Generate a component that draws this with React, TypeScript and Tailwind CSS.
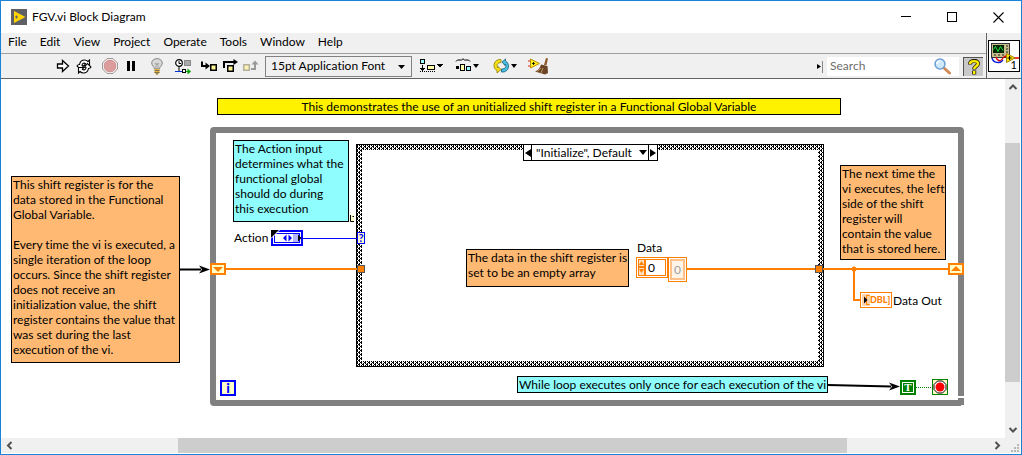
import React from 'react';
import { clsx } from 'clsx';

const menus = ['File', 'Edit', 'View', 'Project', 'Operate', 'Tools', 'Window', 'Help'];

interface ToolButtonProps {
    label: string;
    className: string;
    children: React.ReactNode;
}

const ToolButton: React.FC<ToolButtonProps> = ({ label, className, children }) => (
    <button type="button" aria-label={label} title={label} className={clsx('flex h-5 shrink-0 items-center justify-center', className)}>
        {children}
    </button>
);

interface NoteProps {
    tone: 'orange' | 'cyan' | 'yellow';
    className: string;
    children: React.ReactNode;
}

const tones = {
    orange: 'bg-[#ffb973]',
    cyan: 'bg-[#8ffdfd]',
    yellow: 'bg-[#fff200]',
};

// Free label on the diagram
const Note: React.FC<NoteProps> = ({ tone, className, children }) => (
    <p className={clsx('absolute border border-black whitespace-pre leading-[15px]', tones[tone], className)}>{children}</p>
);

const TitleBar = () => (
    <header className="flex h-8 items-center bg-white pl-2.5">
        <svg width="16" height="16" className="shrink-0">
            <rect width="16" height="16" fill="#5f6065" />
            <path d="M3 2 L14.5 8 L3 14 Z" fill="#ffd400" />
            <path d="M4 8h3M5.500 6.500v3" stroke="#5f6065" />
        </svg>
        <h1 className="ml-[5px] flex-1 text-xs">FGV.vi Block Diagram</h1>
        <button type="button" aria-label="Minimize" className="flex h-full w-[46px] items-center justify-center">
            <svg width="10" height="10" shapeRendering="crispEdges"><path d="M0 4.500h10" stroke="#000" /></svg>
        </button>
        <button type="button" aria-label="Maximize" className="flex h-full w-[46px] items-center justify-center">
            <svg width="10" height="10" shapeRendering="crispEdges"><rect x=".5" y=".5" width="9" height="9" fill="none" stroke="#000" /></svg>
        </button>
        <button type="button" aria-label="Close" className="flex h-full w-[46px] items-center justify-center">
            <svg width="11" height="11"><path d="M.5 .5l10 10M10.5 .5l-10 10" stroke="#000" strokeWidth="1.1" /></svg>
        </button>
    </header>
);

const Caret = () => <path d="M18 6h6l-3 4z" fill="#000" />;

const Toolbar = () => (
    <div className="flex h-6 items-center pl-[52px]">
        <ToolButton label="Run" className="w-5">
            <svg width="14" height="14"><path d="M1.500 5h5V1.500L12.500 7 6.500 12.500V9h-5z" fill="#fff" stroke="#000" strokeWidth="1.300" /></svg>
        </ToolButton>
        <ToolButton label="Run Continuously" className="w-[22px]">
            <svg width="16" height="15" fill="#fff" stroke="#000" strokeWidth="1.100">
                <path d="M1 7c.5-1 1.500-1.500 2.500-1.500C4 3 6 1 8.500 1c1.500 0 2.500.5 3.500 1.500L13.500 1v5.500H8L9.700 4.800C8.500 3.500 6 4 6 6.500l1.500.5L4.500 10.500z" />
                <path d="M15 8c-.5 1-1.500 1.500-2.500 1.500C12 12 10 14 7.500 14c-1.500 0-2.500-.5-3.500-1.500L2.500 14V8.500H8L6.300 10.200C7.500 11.500 10 11 10 8.500L8.500 8l3-3.500z" />
            </svg>
        </ToolButton>
        <ToolButton label="Abort Execution" className="ml-1 w-[22px]">
            <svg width="16" height="16">
                <path d="M5 .5h6L15.500 5v6L11 15.500H5L.5 11V5z" fill="#f4e4e4" stroke="#a09a9a" />
                <path d="M5.500 2.500h5l3 3v5l-3 3h-5l-3-3v-5z" fill="#dc9c9c" stroke="#c99" />
            </svg>
        </ToolButton>
        <ToolButton label="Pause" className="w-5">
            <svg width="10" height="12"><path d="M1 1h3v10H1zM6 1h3v10H6z" fill="#000" /></svg>
        </ToolButton>
        <ToolButton label="Highlight Execution" className="ml-[5px] w-[22px]">
            <svg width="12" height="17">
                <path d="M3.500 11C3.500 8.500 .7 8 .7 5 .7 2.500 3 .6 6 .6s5.300 2 5.300 4.400c0 3-2.800 3.500-2.800 6z" fill="#d8d8d8" stroke="#888" />
                <path d="M4 5l1.500 2L6 5l.5 2L8 5M5 11V7M7 11V7" fill="none" stroke="#999" strokeWidth=".8" />
                <path d="M3.500 11h5v3.500L7 16.500H5l-1.500-2z" fill="#e3b040" />
                <path d="M3.500 12.500h5M3.500 14.500h5M5 16h2" stroke="#775" />
            </svg>
        </ToolButton>
        <ToolButton label="Retain Wire Values" className="ml-1 w-[22px]">
            <svg width="16" height="15">
                <circle cx="4" cy="4" r="3.300" fill="#fff" stroke="#000" strokeWidth="1.200" />
                <path d="M4 2v2.500h2M4 7.500v5" fill="none" stroke="#000" />
                <rect x="9.500" y="1.500" width="6" height="5" fill="#aaa" stroke="#888" />
                <path d="M0 12.500h7" stroke="#0030e0" />
                <rect x="7.500" y="10.500" width="3" height="3" fill="#fff" stroke="#000" />
                <path d="M11 12.500h2" stroke="#0a0" />
                <path d="M12.500 9.500l3.500 3-3.500 3z" fill="#00a000" />
            </svg>
        </ToolButton>
        <ToolButton label="Step Into" className="ml-1 w-[22px]">
            <svg width="16" height="12">
                <path d="M1 1.500V6h5" fill="none" stroke="#000" strokeWidth="2" />
                <path d="M4.500 2.500L9 6 4.500 9.500z" fill="#000" />
                <rect x="9.750" y="4.750" width="5.500" height="5.500" fill="#fff799" stroke="#000" strokeWidth="1.500" />
            </svg>
        </ToolButton>
        <ToolButton label="Step Over" className="w-[22px]">
            <svg width="16" height="14">
                <path d="M1 9V3h11" fill="none" stroke="#000" strokeWidth="2" />
                <path d="M10.500 0l4.500 3-4.500 3z" fill="#000" />
                <rect x="4.750" y="6.750" width="5.500" height="5.500" fill="#fff799" stroke="#000" strokeWidth="1.500" />
            </svg>
        </ToolButton>
        <ToolButton label="Step Out" className="w-[18px]">
            <svg width="16" height="12">
                <rect x=".8" y="4.750" width="5.500" height="5.500" fill="#fbf3b8" stroke="#b5b09a" strokeWidth="1.500" />
                <path d="M8 9h4V4" fill="none" stroke="#999" strokeWidth="2" />
                <path d="M8.500 4.500l3.500-4 3.500 4z" fill="#999" />
            </svg>
        </ToolButton>
        <div className="relative ml-[5px]">
            <select aria-label="Text Settings" className="block h-[21px] w-[147px] appearance-none border border-[#828282] bg-[#f0f0f0] pl-[5px] text-xs">
                <option>15pt Application Font</option>
            </select>
            <svg width="7" height="4" className="pointer-events-none absolute top-[9px] right-[7px]"><path d="M0 0h7L3.500 4z" /></svg>
        </div>
        <ToolButton label="Align Objects" className="ml-1.5 w-[26px]">
            <svg width="24" height="16" shapeRendering="crispEdges">
                <rect x="1.500" y="1.500" width="4" height="4" fill="#9ff" stroke="#000" />
                <path d="M3.500 7v4" stroke="#000" />
                <path d="M1 10h5l-2.500 3z" fill="#000" />
                <path d="M1 13.500h15" stroke="#000" strokeDasharray="1 1" />
                <rect x="8.500" y="7.500" width="7" height="4" fill="#ffa" stroke="#000" />
                <Caret />
            </svg>
        </ToolButton>
        <ToolButton label="Distribute Objects" className="ml-2.5 w-[26px]">
            <svg width="24" height="16">
                <path d="M1 3.500l1.500-1.500h4L8 .8 9.500 2h4L15 3.500" fill="none" stroke="#000" />
                <rect x="1" y="8" width="3" height="3" fill="#000" />
                <rect x="5.500" y="6.500" width="4" height="6" fill="#ffa" stroke="#000" />
                <rect x="11.500" y="8.500" width="4" height="4" fill="#9ff" stroke="#000" />
                <Caret />
            </svg>
        </ToolButton>
        <ToolButton label="Reorder" className="ml-3 w-[26px]">
            <svg width="24" height="16">
                <path d="M8 1.500C4 1 1 4 1 7.500c0 2 1 4 3 5V15l4-3.500L5 8.500v1.500C3 7.500 4.500 4.500 8 4.500z" fill="#f7e017" stroke="#8a7a00" strokeWidth=".8" />
                <path d="M8.500 14c4 .5 7-2 7-6 0-2-1-4-3-5V1L9 4l3 3.500V6c2 2.500.5 5-3.500 5z" fill="#49bfe0" stroke="#135a78" strokeWidth=".8" />
                <Caret />
            </svg>
        </ToolButton>
        <ToolButton label="Clean Up Diagram" className="ml-[9px] w-6">
            <svg width="22" height="17">
                <path d="M0 3h4M0 8h4" stroke="#e02020" />
                <path d="M2.500 1l9 4.500-9 4.500z" fill="#ffee20" stroke="#c09000" />
                <path d="M4 5.500h3M5.500 4v3" stroke="#000" strokeWidth=".8" />
                <path d="M18 0l2 .5L18.500 7h-2.500z" fill="#8a5a2a" />
                <path d="M13 6.500l6.500 1.500 .5 7-3 1.500L7 13.500c3-1 5-3.500 6-7z" fill="#6b4526" />
                <path d="M9 13.500l4-3.500M13 15l2-5" stroke="#d9b070" strokeWidth=".8" />
            </svg>
        </ToolButton>
        <span className="flex-1" />
        <svg width="8" height="13" className="mr-[3px] shrink-0"><path d="M1 4l4 2.500L1 9z" /><path d="M6.500 1v12" stroke="#888" /></svg>
        <label className="flex h-[19px] w-[132px] items-center bg-white">
            <input type="search" aria-label="Search" placeholder="Search" className="w-0 flex-1 pl-[3px] text-xs outline-none placeholder:text-[#6d6d6d]" />
            <svg width="17" height="17" className="mr-2">
                <path d="M10 10l5.500 5" stroke="#d08a58" strokeWidth="3" strokeLinecap="round" />
                <circle cx="6" cy="6" r="5" fill="#cfe8fb" stroke="#6f9fd0" strokeWidth="1.500" />
                <path d="M3 6c0-2 1.500-3 3-3" stroke="#fff" strokeWidth="1.500" fill="none" />
            </svg>
        </label>
        <button type="button" aria-label="Show Context Help" className="mr-[3px] ml-1 flex h-[19px] w-5 items-center justify-center border-t border-l border-[#555] bg-[#c8c8c8]">
            <svg width="12" height="16" fill="none">
                <path d="M2 5.500C2 .8 10 .8 10 4.500 10 7.500 6.200 7 6.200 10.500M6.200 11.500v4" stroke="#222200" strokeWidth="4" />
                <path d="M2 5C2 1.200 10 1.200 10 4.500 10 7.500 6.200 7 6.200 10M6.200 12v3" stroke="#ffee00" strokeWidth="2.400" />
            </svg>
        </button>
    </div>
);

const ViIcon = () => (
    <div className="flex w-[35px] shrink-0 items-center justify-center border-l border-[#646464]">
        <div className="relative size-8 border border-black bg-white">
            <svg width="30" height="30" className="block">
                <rect x="2.500" y="2.500" width="18" height="14" fill="#c9bd8e" stroke="#333" />
                <rect x="4" y="4" width="11" height="8" fill="#042804" />
                <path d="M4.500 8.500l2-3 2.500 5 2.500-5 2.500 4" fill="none" stroke="#1fe03a" />
                <path d="M17 5h2M17 8h2M17 11h2M5 14h2M9 14h2M13 14h2" stroke="#554" strokeWidth="1.500" />
                <path d="M3 17c1 5 8 6 11 2" fill="none" stroke="#0018d8" strokeWidth="1.300" />
                <path d="M7 16c1 4 5 5 7 1 1-1.500 2-2 4-2M25 17h5" fill="none" stroke="#e00000" strokeWidth="1.300" />
                <path d="M17.500 12.500l8.500 4.500-8.500 4.500z" fill="#ffe800" stroke="#a08000" />
                <path d="M18.500 17h4M20.500 15v4" stroke="#000" />
            </svg>
            <span className="absolute right-0.5 bottom-0 text-[11px] leading-[12px]">1</span>
        </div>
    </div>
);

const arrowPaths = {
    up: 'M1.500 6L5 2.500 8.500 6',
    down: 'M1.500 3L5 6.500 8.500 3',
    left: 'M6.500 1L3 4.500 6.500 8',
    right: 'M3.500 1L7 4.500 3.500 8',
};

const ScrollArrow: React.FC<{ dir: keyof typeof arrowPaths }> = ({ dir }) => (
    <button type="button" aria-label={`Scroll ${dir}`} className="flex size-[17px] max-h-full max-w-full shrink-0 items-center justify-center">
        <svg width="10" height="9"><path d={arrowPaths[dir]} fill="none" stroke="#505050" strokeWidth="2" /></svg>
    </button>
);

// Wires, the case structure frame and arrows
const Wires = () => (
    <svg width="1004" height="359" className="absolute top-0 left-0">
        <defs>
            <pattern id="weave" width="4" height="4" patternUnits="userSpaceOnUse">
                <rect width="4" height="4" fill="#fff" />
                <path d="M0 0h1v1h-1zM2 0h1v1h-1zM1 1h2v1h-2zM0 2h1v1h-1zM2 2h1v1h-1zM0 3h1v1h-1zM3 3h1v1h-1z" shapeRendering="crispEdges" />
            </pattern>
        </defs>
        <path d="M356 66h466v221h-466zM361 71v211h456v-211z" fill="url(#weave)" fillRule="evenodd" />
        <rect x="355.500" y="65.500" width="467" height="222" fill="none" stroke="#000" />

        <path d="M302 159.500h54" stroke="#00f" />
        <path d="M225 190h132M686 190h262M853 190v31h7" fill="none" stroke="#ff8000" strokeWidth="2" />
        <circle cx="853" cy="190" r="2.500" fill="#ff8000" />
        <path d="M915 308.500h16" stroke="#008000" strokeDasharray="1 1" />

        <path d="M179 190.500h21M827 306l63 1.500" stroke="#000" strokeWidth="2" />
        <path d="M198 186.500l11 4-11 4 3-4zM888 303.500l11 4-11 4 3-4z" />

        <rect x="356.500" y="186.500" width="7" height="7" fill="#ff8000" stroke="#555" />
        <rect x="814.500" y="186.500" width="7" height="7" fill="#ff8000" stroke="#555" />
    </svg>
);

const ShiftRegister: React.FC<{ side: 'left' | 'right' }> = ({ side }) => (
    <svg width="16" height="12" className={clsx('absolute top-[184px]', side === 'left' ? 'left-[209px]' : 'left-[947px]')}>
        <rect x="1" y="1" width="14" height="10" fill="#ffffc8" stroke="#ff8000" strokeWidth="2" />
        <path d={side === 'left' ? 'M3 4h10L8 9z' : 'M3 8h10L8 3z'} fill="#ff8000" />
    </svg>
);

const Diagram = () => (
    <main className="relative min-h-[359px] flex-1 overflow-hidden bg-white">
        <div className="absolute top-12 left-[209px] h-[279px] w-[754px] rounded-sm border-6 border-[#808080]" />
        {/* resize corner of the loop */}
        <svg width="9" height="12" className="absolute top-[316px] left-[956px]">
            <path d="M1 1h8v2H0V2z" fill="#fff" />
            <path d="M5 3h2v8H1V4z" fill="#808080" />
            <path d="M4 10h4v2H4z" fill="#fff" />
        </svg>
        <Wires />

        <Note tone="yellow" className="top-[19px] left-[216px] w-[624px] text-center">
            This demonstrates the use of an unitialized shift register in a Functional Global Variable
        </Note>
        <Note tone="orange" className="top-[97px] left-2.5 h-[187px] w-[169px] pl-px">
            {`This shift register is for the
data stored in the Functional
Global Variable.

Every time the vi is executed, a
single iteration of the loop
occurs. Since the shift register
does not receive an
initialization value, the shift
register contains the value that
was set during the last
execution of the vi.`}
        </Note>
        <Note tone="cyan" className="top-[61px] left-[232px] h-[82px] w-[116px] pl-px">
            {`The Action input
determines what the
functional global
should do during
this execution`}
        </Note>
        <Note tone="orange" className="top-[170px] left-[465px] h-[38px] w-[163px] pl-px">
            {`The data in the shift register is
set to be an empty array`}
        </Note>
        <Note tone="orange" className="top-[86px] left-[839px] h-[95px] w-[106px] pl-px">
            {`The next time the
vi executes, the left
side of the shift
register will
contain the value
that is stored here.`}
        </Note>
        <Note tone="cyan" className="top-[297px] left-[516px] w-[311px] pl-px">
            While loop executes only once for each execution of the vi
        </Note>

        {/* clipped subdiagram label */}
        <svg width="4" height="7" className="absolute top-[136px] left-[349px]">
            <rect width="4" height="7" fill="#ffffc8" />
            <path d="M.5 0v6.500H4M2.500 1.500H4" fill="none" stroke="#000" />
        </svg>

        <div className="absolute top-[65px] left-[522px] flex h-[17px] w-[135px] border border-black bg-white">
            <button type="button" aria-label="Previous case" className="flex w-2 items-center justify-center border-r border-black">
                <svg width="6" height="8"><path d="M6 0v8L0 4z" /></svg>
            </button>
            <select aria-label="Case" className="w-0 flex-1 appearance-none pl-1 text-xs leading-[15px]">
                <option>"Initialize", Default</option>
            </select>
            <svg width="8" height="5" className="pointer-events-none absolute top-[5px] left-[115px]"><path d="M0 0h8L4 5z" /></svg>
            <button type="button" aria-label="Next case" className="flex w-[9px] items-center justify-center border-l border-black">
                <svg width="6" height="8"><path d="M0 0v8l6-4z" /></svg>
            </button>
        </div>

        <span className="absolute top-[151px] left-[233px] leading-[15px]">Action</span>
        <svg width="32" height="16" className="absolute top-[151px] left-[270px]">
            <rect x="1" y="1" width="30" height="14" fill="#fff" stroke="#00f" strokeWidth="2" />
            <rect x="22" y="3" width="7" height="10" fill="#b4b4ff" />
            <rect x="3.500" y="3.500" width="25" height="9" fill="none" stroke="#00f" />
            <path d="M12 8l3.500-3.500v7zM21 8l-3.500-3.500v7z" fill="#00f" />
            <path d="M27 4.500l3.500 3.500-3.500 3.500z" />
            <path d="M0 0h8L0 8z" />
            <path d="M8.500 0L0 8.500" stroke="#fff" />
        </svg>
        <span className="absolute top-[153px] left-[356px] h-[12px] w-2 border border-[#00f] bg-[#ffffc8] text-center text-[11px] leading-[10px] font-bold text-[#00f]">?</span>

        <ShiftRegister side="left" />
        <ShiftRegister side="right" />

        <label htmlFor="data-index" className="absolute top-[161px] left-[636px] leading-[15px]">Data</label>
        <div className="absolute top-[178px] left-[635px] flex items-start">
            <div className="flex h-[21px] w-8 items-center border border-[#ff8000] bg-white p-px">
                <svg width="7" height="17" className="shrink-0">
                    <rect width="7" height="17" fill="#ff8000" />
                    <path d="M1 1h5v6H1zM1 9h5v7H1z" fill="#ffe0c0" />
                    <path d="M1 6l2.500-4L6 6zM1 10l2.500 4L6 10z" fill="#ff8000" />
                </svg>
                <input id="data-index" defaultValue="0" className="h-[17px] w-0 flex-1 border border-[#ff8000] pl-0.5 text-xs outline-none" />
            </div>
            <span className="h-[25px] w-[19px] border border-[#ff8000] bg-white p-px">
                <span className="block h-full border-2 border-[#ffc08a] bg-[#fff4e8] text-center text-xs leading-[18px] text-[#a0a0a0]">0</span>
            </span>
        </div>

        <div className="absolute top-[213px] left-[859px] flex h-4 w-8 items-center border border-[#ff8000] bg-white">
            <svg width="9" height="12" className="shrink-0">
                <rect x="1" width="8" height="12" fill="#ffd2a8" />
                <path d="M8.500 1.500h-3v9h3" fill="none" stroke="#ff8000" />
                <path d="M3 2.500l3.500 3.500-3.500 3.500z" />
            </svg>
            <span className="text-[9px] leading-[12px] font-black text-[#ff8000]">DBL]</span>
        </div>
        <span className="absolute top-[214px] left-[892px] leading-[15px]">Data Out</span>

        <span className="absolute top-[301px] left-[219px] flex size-4 items-center justify-center border-2 border-[#00f] bg-[#ffffc8] text-sm leading-[12px] font-black text-[#00f]">i</span>

        <span className="absolute top-[301px] left-[899px] flex h-[15px] w-4 items-center justify-center border-2 border-[#008000] bg-[#008000]">
            <span className="flex size-full items-center justify-center border border-white font-['Liberation_Serif',serif] text-[11px] leading-[9px] font-bold text-white">T</span>
        </span>
        <svg width="16" height="16" className="absolute top-[300px] left-[931px]">
            <rect x=".5" y=".5" width="15" height="15" fill="#ffffc8" stroke="#008000" />
            <path d="M5.500 2h5L14 5.500v5L10.500 14h-5L2 10.500v-5z" fill="#fff" stroke="#000" />
            <circle cx="8" cy="8" r="4.500" fill="#f00" />
        </svg>
    </main>
);

export default function App() {
    return (
        <div className="flex min-h-screen flex-col border border-[#1883d7] bg-white font-[Lato,'Open_Sans',sans-serif] text-xs text-black [font-variant-ligatures:none]">
            <TitleBar />
            <div className="flex border-b border-[#646464] bg-[#f0f0f0]">
                <div className="min-w-0 flex-1">
                    <nav className="flex h-[21px] items-start gap-[13px] border-b border-[#a0a0a0] pt-px pl-[7px]">
                        {menus.map((menu) => (
                            <button key={menu} type="button" className="leading-4">{menu}</button>
                        ))}
                    </nav>
                    <Toolbar />
                </div>
                <ViIcon />
            </div>

            <div className="flex flex-1">
                <Diagram />
                <div className="mr-px flex w-[15px] shrink-0 flex-col items-center bg-[#f0f0f0]">
                    <ScrollArrow dir="up" />
                    <span className="flex-[47]" />
                    <span className="w-full flex-[239] bg-[#cdcdcd]" />
                    <span className="flex-[39]" />
                    <ScrollArrow dir="down" />
                </div>
            </div>
            <div className="mr-px mb-px flex h-[15px] shrink-0 items-center bg-[#f0f0f0]">
                <ScrollArrow dir="left" />
                <span className="flex-[160]" />
                <span className="h-full flex-[669] bg-[#cdcdcd]" />
                <span className="flex-[141]" />
                <ScrollArrow dir="right" />
                <svg width="15" height="15" className="shrink-0" shapeRendering="crispEdges">
                    <path d="M12 6h2v2h-2zM9 9h2v2H9zM12 9h2v2h-2zM6 12h2v2H6zM9 12h2v2H9zM12 12h2v2h-2z" fill="#b8b8b8" />
                </svg>
            </div>
        </div>
    );
}
